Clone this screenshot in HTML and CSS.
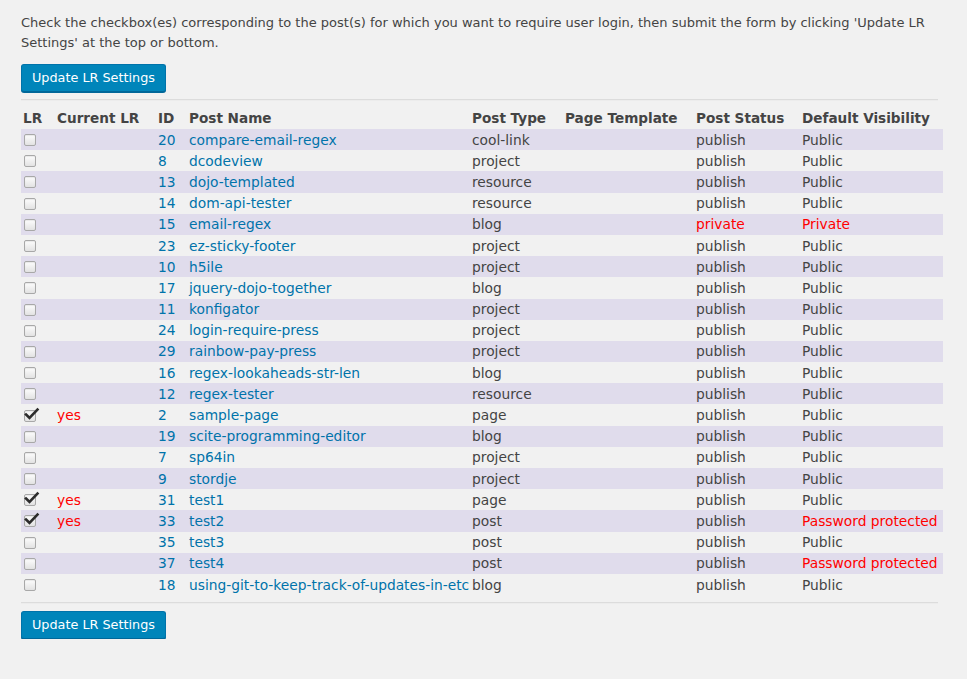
FILE: index.html
```html
<!DOCTYPE html>
<html>
<head>
<meta charset="utf-8">
<link rel="stylesheet" href="styles.css">
</head>
<body>
<div class="wrap">
<p class="intro">Check the checkbox(es) corresponding to the post(s) for which you want to require user login, then submit the form by clicking 'Update LR Settings' at the top or bottom.</p>
<button class="btn">Update LR Settings</button>
<hr class="sep">
<table class="lr">
<colgroup>
<col class="c-lr"><col class="c-cur"><col class="c-id"><col class="c-name"><col class="c-type"><col class="c-tpl"><col class="c-status"><col class="c-vis">
</colgroup>
<thead>
<tr><th>LR</th><th>Current LR</th><th>ID</th><th>Post Name</th><th>Post Type</th><th>Page Template</th><th>Post Status</th><th>Default Visibility</th></tr>
</thead>
<tbody>
<tr class="alt"><td><span class="cb"></span></td><td></td><td class="lnk">20</td><td class="lnk">compare-email-regex</td><td>cool-link</td><td></td><td>publish</td><td>Public</td></tr>
<tr><td><span class="cb"></span></td><td></td><td class="lnk">8</td><td class="lnk">dcodeview</td><td>project</td><td></td><td>publish</td><td>Public</td></tr>
<tr class="alt"><td><span class="cb"></span></td><td></td><td class="lnk">13</td><td class="lnk">dojo-templated</td><td>resource</td><td></td><td>publish</td><td>Public</td></tr>
<tr><td><span class="cb"></span></td><td></td><td class="lnk">14</td><td class="lnk">dom-api-tester</td><td>resource</td><td></td><td>publish</td><td>Public</td></tr>
<tr class="alt"><td><span class="cb"></span></td><td></td><td class="lnk">15</td><td class="lnk">email-regex</td><td>blog</td><td></td><td class="red">private</td><td class="red">Private</td></tr>
<tr><td><span class="cb"></span></td><td></td><td class="lnk">23</td><td class="lnk">ez-sticky-footer</td><td>project</td><td></td><td>publish</td><td>Public</td></tr>
<tr class="alt"><td><span class="cb"></span></td><td></td><td class="lnk">10</td><td class="lnk">h5ile</td><td>project</td><td></td><td>publish</td><td>Public</td></tr>
<tr><td><span class="cb"></span></td><td></td><td class="lnk">17</td><td class="lnk">jquery-dojo-together</td><td>blog</td><td></td><td>publish</td><td>Public</td></tr>
<tr class="alt"><td><span class="cb"></span></td><td></td><td class="lnk">11</td><td class="lnk">konfigator</td><td>project</td><td></td><td>publish</td><td>Public</td></tr>
<tr><td><span class="cb"></span></td><td></td><td class="lnk">24</td><td class="lnk">login-require-press</td><td>project</td><td></td><td>publish</td><td>Public</td></tr>
<tr class="alt"><td><span class="cb"></span></td><td></td><td class="lnk">29</td><td class="lnk">rainbow-pay-press</td><td>project</td><td></td><td>publish</td><td>Public</td></tr>
<tr><td><span class="cb"></span></td><td></td><td class="lnk">16</td><td class="lnk">regex-lookaheads-str-len</td><td>blog</td><td></td><td>publish</td><td>Public</td></tr>
<tr class="alt"><td><span class="cb"></span></td><td></td><td class="lnk">12</td><td class="lnk">regex-tester</td><td>resource</td><td></td><td>publish</td><td>Public</td></tr>
<tr><td><span class="cb"><svg class="tick" width="16" height="14" viewBox="0 0 16 14"><path d="M2 7.5 L5.5 11 L13.5 2.5" fill="none" stroke="#2c2c2c" stroke-width="2.6" stroke-linecap="square"/></svg></span></td><td class="red">yes</td><td class="lnk">2</td><td class="lnk">sample-page</td><td>page</td><td></td><td>publish</td><td>Public</td></tr>
<tr class="alt"><td><span class="cb"></span></td><td></td><td class="lnk">19</td><td class="lnk">scite-programming-editor</td><td>blog</td><td></td><td>publish</td><td>Public</td></tr>
<tr><td><span class="cb"></span></td><td></td><td class="lnk">7</td><td class="lnk">sp64in</td><td>project</td><td></td><td>publish</td><td>Public</td></tr>
<tr class="alt"><td><span class="cb"></span></td><td></td><td class="lnk">9</td><td class="lnk">stordje</td><td>project</td><td></td><td>publish</td><td>Public</td></tr>
<tr><td><span class="cb"><svg class="tick" width="16" height="14" viewBox="0 0 16 14"><path d="M2 7.5 L5.5 11 L13.5 2.5" fill="none" stroke="#2c2c2c" stroke-width="2.6" stroke-linecap="square"/></svg></span></td><td class="red">yes</td><td class="lnk">31</td><td class="lnk">test1</td><td>page</td><td></td><td>publish</td><td>Public</td></tr>
<tr class="alt"><td><span class="cb"><svg class="tick" width="16" height="14" viewBox="0 0 16 14"><path d="M2 7.5 L5.5 11 L13.5 2.5" fill="none" stroke="#2c2c2c" stroke-width="2.6" stroke-linecap="square"/></svg></span></td><td class="red">yes</td><td class="lnk">33</td><td class="lnk">test2</td><td>post</td><td></td><td>publish</td><td class="red">Password protected</td></tr>
<tr><td><span class="cb"></span></td><td></td><td class="lnk">35</td><td class="lnk">test3</td><td>post</td><td></td><td>publish</td><td>Public</td></tr>
<tr class="alt"><td><span class="cb"></span></td><td></td><td class="lnk">37</td><td class="lnk">test4</td><td>post</td><td></td><td>publish</td><td class="red">Password protected</td></tr>
<tr><td><span class="cb"></span></td><td></td><td class="lnk">18</td><td class="lnk">using-git-to-keep-track-of-updates-in-etc</td><td>blog</td><td></td><td>publish</td><td>Public</td></tr>
</tbody>
</table>
<hr class="sep sep-bottom">
<button class="btn">Update LR Settings</button>
</div>
</body>
</html>
```
FILE: styles.css
```css
html, body {
  margin: 0;
  padding: 0;
  background: #f1f1f1;
}
body {
  font-family: "DejaVu Sans", "Liberation Sans", sans-serif;
  font-size: 13px;
  color: #444;
}
.wrap {
  padding: 0 17px 0 21px;
}
.intro {
  margin: 13px 0 12px;
  line-height: 19.5px;
  color: #444;
}
.btn {
  display: block;
  height: 28px;
  padding: 0 10px 1px 10px;
  font-family: "DejaVu Sans", "Liberation Sans", sans-serif;
  font-size: 12.8px;
  color: #fff;
  background: #0085ba;
  border: 1px solid #0073aa;
  border-bottom-color: #006799;
  border-radius: 3px;
  box-shadow: 0 1px 0 #006799;
  cursor: pointer;
}
.sep {
  margin: 7px 12px 0 0;
  border: 0;
  border-top: 1px solid #dcdcdc;
  border-bottom: 1px solid #ececec;
  height: 0;
}
.sep-bottom {
  margin: 7px 12px 7px 0;
}
.lr {
  margin-top: 7px;
  width: 922px;
  border-collapse: collapse;
  table-layout: fixed;
  font-size: 13.8px;
}
.c-lr { width: 34px; }
.c-cur { width: 101px; }
.c-id { width: 31px; }
.c-name { width: 283px; }
.c-type { width: 93px; }
.c-tpl { width: 131px; }
.c-status { width: 106px; }
.c-vis { width: 143px; }
.lr th {
  text-align: left;
  font-weight: bold;
  font-size: 13.6px;
  color: #444;
  padding: 0 0 2px 2px;
  height: 19px;
  white-space: nowrap;
}
.lr td {
  padding: 0 0 0 2px;
  height: 21.2px;
  white-space: nowrap;
  overflow: visible;
  color: #444;
}
.lr tr.alt td {
  background: #e0dcec;
}
.lr td.lnk {
  color: #0073aa;
}
.lr td.red {
  color: #f00;
}
.cb {
  position: relative;
  display: block;
  width: 10px;
  height: 10px;
  margin: 1px 0 0 1px;
  border: 1px solid #a8a8a8;
  border-radius: 2px;
  background: linear-gradient(#fdfdfd, #e2e2e2);
  box-shadow: inset 0 1px 1px rgba(0,0,0,0.08);
}
.tick {
  position: absolute;
  left: -1px;
  top: -4px;
}
```
